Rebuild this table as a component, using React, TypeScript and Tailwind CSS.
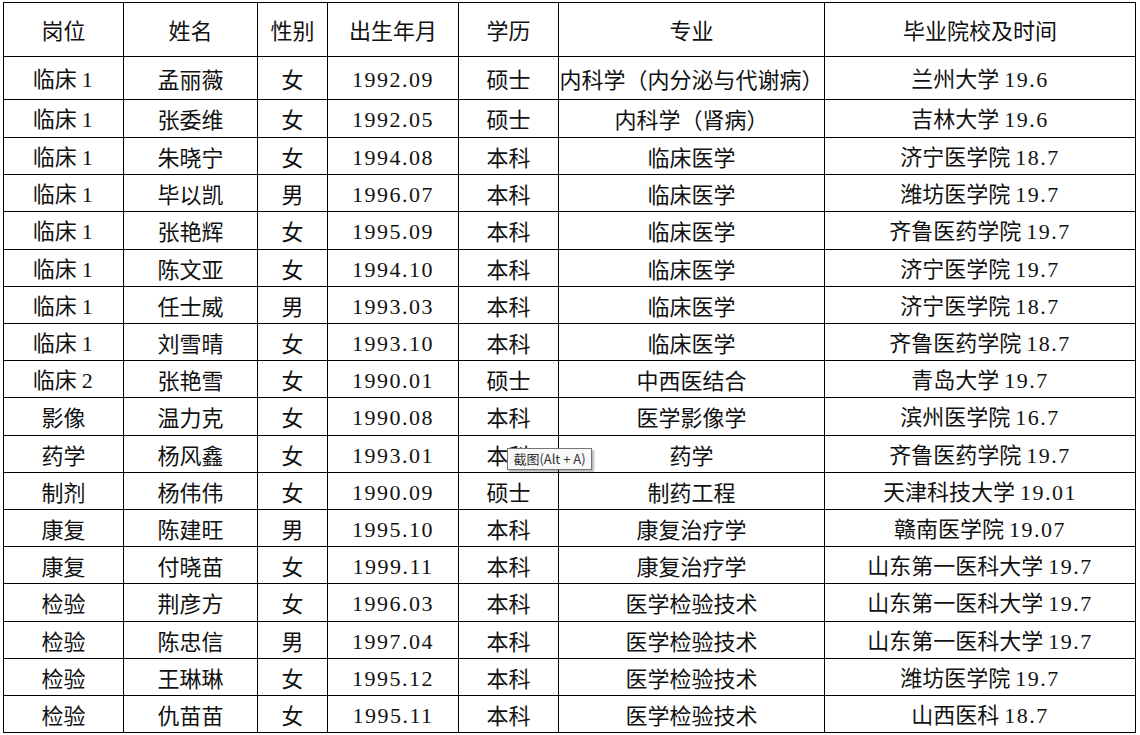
import React from "react";

const COLS = "grid-cols-[120px_134px_70px_131px_100px_266px_311px]";

const rows: string[][] = [
  ["临床 1", "孟丽薇", "女", "1992.09", "硕士", "内科学（内分泌与代谢病）", "兰州大学 19.6"],
  ["临床 1", "张委维", "女", "1992.05", "硕士", "内科学（肾病）", "吉林大学 19.6"],
  ["临床 1", "朱晓宁", "女", "1994.08", "本科", "临床医学", "济宁医学院 18.7"],
  ["临床 1", "毕以凯", "男", "1996.07", "本科", "临床医学", "潍坊医学院 19.7"],
  ["临床 1", "张艳辉", "女", "1995.09", "本科", "临床医学", "齐鲁医药学院 19.7"],
  ["临床 1", "陈文亚", "女", "1994.10", "本科", "临床医学", "济宁医学院 19.7"],
  ["临床 1", "任士威", "男", "1993.03", "本科", "临床医学", "济宁医学院 18.7"],
  ["临床 1", "刘雪晴", "女", "1993.10", "本科", "临床医学", "齐鲁医药学院 18.7"],
  ["临床 2", "张艳雪", "女", "1990.01", "硕士", "中西医结合", "青岛大学 19.7"],
  ["影像", "温力克", "女", "1990.08", "本科", "医学影像学", "滨州医学院 16.7"],
  ["药学", "杨风鑫", "女", "1993.01", "本科", "药学", "齐鲁医药学院 19.7"],
  ["制剂", "杨伟伟", "女", "1990.09", "硕士", "制药工程", "天津科技大学 19.01"],
  ["康复", "陈建旺", "男", "1995.10", "本科", "康复治疗学", "赣南医学院 19.07"],
  ["康复", "付晓苗", "女", "1999.11", "本科", "康复治疗学", "山东第一医科大学 19.7"],
  ["检验", "荆彦方", "女", "1996.03", "本科", "医学检验技术", "山东第一医科大学 19.7"],
  ["检验", "陈忠信", "男", "1997.04", "本科", "医学检验技术", "山东第一医科大学 19.7"],
  ["检验", "王琳琳", "女", "1995.12", "本科", "医学检验技术", "潍坊医学院 19.7"],
  ["检验", "仇苗苗", "女", "1995.11", "本科", "医学检验技术", "山西医科 18.7"],
];

const header = ["岗位", "姓名", "性别", "出生年月", "学历", "专业", "毕业院校及时间"];

// digits in the sheet are wide half-width serif glyphs
function Txt({ s }: { s: string }) {
  const parts = s.split(/([0-9.]+)/);
  return (
    <span>
      {parts.map((p, i) =>
        /^[0-9.]+$/.test(p) ? (
          <span key={i} className="font-['Liberation_Serif',serif] text-[22px] tracking-[1.5px]">
            {p}
          </span>
        ) : (
          <span key={i}>{p}</span>
        )
      )}
    </span>
  );
}

function rowHeight(i: number) {
  if (i === 0) return "h-[43px]";
  if (i === 1) return "h-[38px]";
  if (i === 4 || i === 9 || i === 14) return "h-[38px]";
  return "h-[37px]";
}

export default function App() {
  return (
    <div className="w-[1140px] h-[735px] bg-white pl-[3px] pt-[2px] font-['Noto_Sans_CJK_SC',sans-serif] text-[22px] text-[#111] relative">
      <div className={`grid ${COLS} w-max border-l border-t border-black`}>
        {header.map((h) => (
          <div
            key={h}
            className="h-[54px] flex items-center justify-center border-r border-b border-black whitespace-nowrap"
          >
            {h}
          </div>
        ))}
        {rows.map((r, i) =>
          r.map((c, j) => (
            <div
              key={i + "-" + j}
              className={`${rowHeight(i)} flex items-center justify-center border-r border-b border-black whitespace-pre overflow-hidden`}
            >
              <Txt s={c} />
            </div>
          ))
        )}
      </div>

      {/* screenshot tool tooltip */}
      <div className="absolute left-[507px] top-[448px] w-[85px] h-[22px] flex items-center justify-center bg-[#f8f8f8] border border-[#767676] shadow-[2px_2px_2px_rgba(0,0,0,0.3)] text-[13px] text-[#333] font-['Noto_Sans_CJK_SC',sans-serif] whitespace-nowrap">
        截图(Alt + A)
      </div>
    </div>
  );
}
